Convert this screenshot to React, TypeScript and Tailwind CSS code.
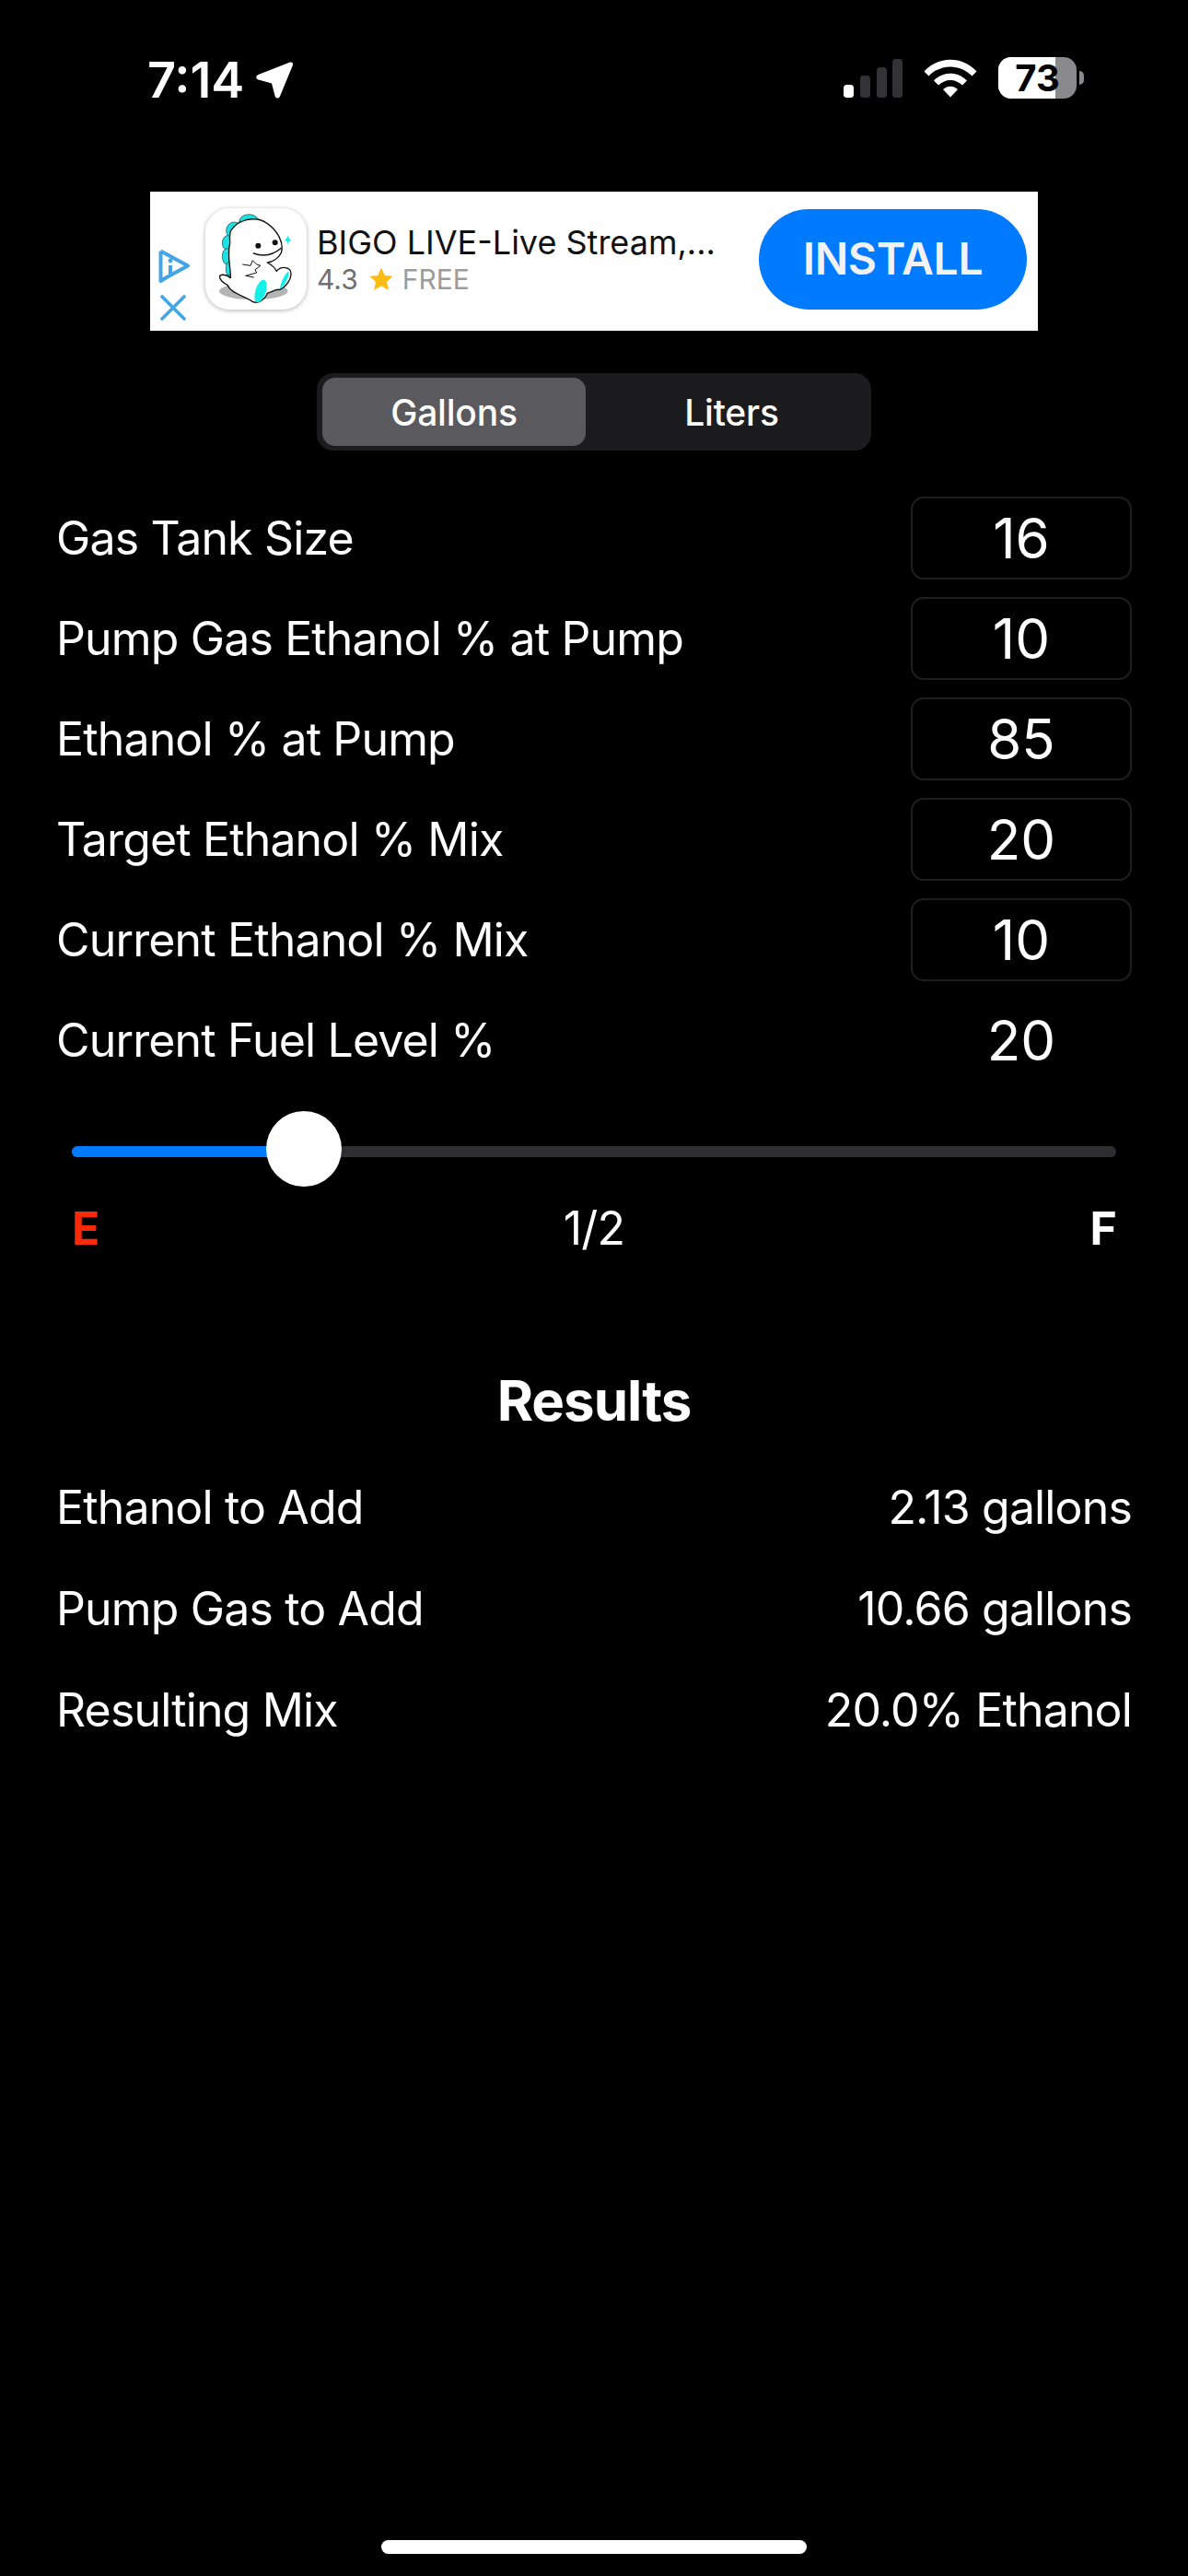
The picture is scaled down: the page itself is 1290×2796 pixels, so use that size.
import React from "react";

const font = { fontFamily: "Inter, 'Liberation Sans', sans-serif" };

function Mascot() {
  return (
    <svg viewBox="218 75 330 330" className="w-full h-full">
      <ellipse cx="375" cy="345" rx="112" ry="28" fill="#b4b4b4" />
      <g fill="#1fe0e0" stroke="#1b3a3a" strokeWidth="2">
        <ellipse cx="360" cy="120" rx="32" ry="25" />
        <ellipse cx="312" cy="148" rx="26" ry="28" />
        <ellipse cx="291" cy="188" rx="18" ry="24" />
        <ellipse cx="288" cy="232" rx="15" ry="26" />
        <ellipse cx="296" cy="272" rx="11" ry="24" />
        <ellipse cx="290" cy="298" rx="12" ry="6" />
      </g>
      <path d="M300 150 C320 115 380 95 420 125 C455 150 475 190 465 220 C455 240 435 250 420 252 C435 260 445 270 450 280 C465 262 497 265 497 288 C497 312 470 345 450 340 L420 352 C410 378 380 390 365 375 C340 360 300 350 290 325 C275 318 262 305 265 295 C275 288 290 295 300 302 C300 260 288 225 298 190 C298 175 296 162 300 150 Z" fill="#fff" stroke="#111" strokeWidth="4" strokeLinejoin="round" />
      <ellipse cx="398" cy="345" rx="17" ry="38" transform="rotate(18 398 345)" fill="#16eee8" />
      <path d="M490 280 C492 300 475 330 460 338 C465 315 475 290 490 280 Z" fill="#16eee8" />
      <circle cx="390" cy="197" r="9" fill="#111" />
      <circle cx="445" cy="187" r="9" fill="#111" />
      <path d="M375 222 Q425 240 465 205" fill="none" stroke="#111" strokeWidth="4" strokeLinecap="round" />
      <path d="M340 258 L365 262 L372 245 L385 258 L398 262 L380 275 L385 285 L350 295 M350 295 L375 300" fill="none" stroke="#111" strokeWidth="3" strokeLinejoin="round" strokeLinecap="round" />
      <path d="M487 163 L491 174 L498 178 L491 182 L487 193 L483 182 L476 178 L483 174 Z" fill="#16eee8" />
    </svg>
  );
}

function InputRow({ label, value, boxed = true }: { label: string; value: string; boxed?: boolean }) {
  return (
    <div className="flex items-center justify-between h-[90px] mb-[19px]">
      <span className="text-[50px] leading-none tracking-[-0.85px] text-white">{label}</span>
      <div className={`w-[240px] h-[90px] rounded-[14px] flex items-center justify-center text-[60px] leading-none text-white ${boxed ? "border-2 border-[#1f1f21]" : ""}`}>
        {value}
      </div>
    </div>
  );
}

function ResultRow({ label, value }: { label: string; value: string }) {
  return (
    <div className="flex items-center justify-between h-[90px] mb-[20px] text-[50px] leading-none tracking-[-0.85px] text-white">
      <span>{label}</span>
      <span>{value}</span>
    </div>
  );
}

export default function App() {
  return (
    <div className="w-[1290px] h-[2796px] bg-black relative overflow-hidden flex flex-col" style={font}>
      {/* status bar */}
      <div className="h-[208px] pt-[62px] pl-[160px] pr-[113px] flex items-start justify-between">
        <div className="flex items-center gap-[12px] h-[50px]">
          <span className="text-[54px] leading-none font-semibold text-white">7:14</span>
          <svg viewBox="0 0 42 42" className="w-[42px] h-[42px]">
            <path d="M38 1.5 C40 1 41.5 2.5 41 4.5 L27 38.5 C25.6 41.5 22.5 41 21.6 38.3 L18 24.5 L3.5 20.5 C0.5 19.5 0.5 16.2 3.5 15 Z" fill="#fff" />
          </svg>
        </div>
        <div className="flex items-start pt-[2px]">
          <svg viewBox="0 0 64 42" className="w-[64px] h-[42px] mr-[23px]">
            <rect x="0" y="28" width="11" height="14" rx="3.5" fill="#fff" />
            <rect x="18" y="18" width="11" height="24" rx="3.5" fill="#333335" />
            <rect x="36" y="9" width="11" height="33" rx="3.5" fill="#333335" />
            <rect x="53" y="0" width="11" height="42" rx="3.5" fill="#333335" />
          </svg>
          <svg viewBox="0 0 58 42" className="w-[58px] h-[42px] mr-[23px]">
            <path d="M0.5 13.5 C16 -3.5 42 -3.5 57.5 13.5 L52.5 18.5 C39.5 5 18.5 5 5.5 18.5 Z" fill="#fff" />
            <path d="M11 23.5 C21 13 37 13 47 23.5 L42 28.5 C34.5 21 23.5 21 16 28.5 Z" fill="#fff" />
            <path d="M21 33 C26 28.5 32 28.5 37 33 L29 41.5 Z" fill="#fff" />
          </svg>
          <div className="relative w-[85px] h-[45px] -mt-[2px] rounded-[14px] bg-[#8a8a8c]">
            <div className="absolute left-0 top-0 bottom-0 w-[62px] rounded-l-[14px] bg-white" />
            <span className="absolute inset-0 flex items-center justify-center text-[40px] leading-none font-bold text-black">73</span>
          </div>
          <div className="w-[5px] h-[15px] mt-[13px] ml-[3px] rounded-r-[5px] bg-[#8a8a8c]" />
        </div>
      </div>

      {/* ad */}
      <div className="w-[964px] h-[151px] ml-[163px] bg-white flex items-center shrink-0">
        <div className="w-[50px] mr-[10px] h-full flex flex-col items-center justify-end pb-[11px] gap-[13px]">
          <svg viewBox="0 0 35 37" className="w-[35px] h-[37px] ml-[2px]">
            <path d="M2.5 2.5 L32 18.5 L9 31 M2.5 2.5 L2.5 35 L9 31" fill="none" stroke="#42a5e8" strokeWidth="4" strokeLinejoin="round" />
            <rect x="11" y="18" width="4" height="10" fill="#42a5e8" />
            <circle cx="13" cy="13" r="2.4" fill="#42a5e8" />
          </svg>
          <svg viewBox="0 0 28 28" className="w-[28px] h-[28px]">
            <path d="M2 2 L26 26 M26 2 L2 26" stroke="#42a5e8" strokeWidth="3.6" strokeLinecap="round" />
          </svg>
        </div>
        <div className="w-[110px] h-[110px] -mt-[5px] rounded-[26px] bg-white shadow-[0_1px_5px_rgba(0,0,0,0.3)] overflow-hidden shrink-0">
          <Mascot />
        </div>
        <div className="ml-[11px] w-[481px] -mt-[6px]">
          <div className="text-[36px] leading-[44px] text-[#111] whitespace-nowrap">BIGO LIVE-Live Stream,...</div>
          <div className="flex items-center h-[36px] text-[30px] leading-none">
            <span className="text-[#6f6f6f]">4.3</span>
            <svg viewBox="0 0 26 26" className="w-[26px] h-[26px] ml-[12px] mr-[10px]">
              <path d="M13 0.5 L16.8 9 L25.5 9.8 L19 16 L21 25 L13 20.2 L5 25 L7 16 L0.5 9.8 L9.2 9 Z" fill="#fdbc11" />
            </svg>
            <span className="text-[#9c9c9c]">FREE</span>
          </div>
        </div>
        <div className="w-[291px] h-[109px] ml-[-1px] -mt-[5px] rounded-full bg-[#007aff] flex items-center justify-center text-[48px] leading-none font-semibold tracking-[-0.3px] text-[#f2f2f2]">
          INSTALL
        </div>
      </div>

      {/* segmented control */}
      <div className="w-[602px] h-[84px] ml-[344px] mt-[46px] rounded-[18px] bg-[#1c1c1e] py-[5px] pl-[6px] pr-[5px] flex shrink-0">
        <div className="w-[286px] h-[74px] rounded-[14px] bg-[#5a5a5e] flex items-center justify-center text-[39px] leading-none tracking-[-0.2px] font-medium text-white">Gallons</div>
        <div className="flex-1 pl-[12px] flex items-center justify-center text-[39px] leading-none tracking-[-0.2px] font-medium text-white">Liters</div>
      </div>

      {/* inputs */}
      <div className="ml-[61px] mr-[61px] mt-[50px]">
        <InputRow label="Gas Tank Size" value="16" />
        <InputRow label="Pump Gas Ethanol % at Pump" value="10" />
        <InputRow label="Ethanol % at Pump" value="85" />
        <InputRow label="Target Ethanol % Mix" value="20" />
        <InputRow label="Current Ethanol % Mix" value="10" />
        <InputRow label="Current Fuel Level %" value="20" boxed={false} />
      </div>

      {/* slider */}
      <div className="mx-[78px] mt-[13px] relative h-[82px] flex items-center shrink-0">
        <div className="w-full h-[12px] rounded-full bg-[#2e2e30] overflow-hidden mt-[6px]">
          <div className="w-[240px] h-full bg-[#007aff]" />
        </div>
        <div className="absolute left-[211px] top-0 w-[82px] h-[82px] rounded-full bg-white" />
      </div>
      <div className="mx-[78px] mt-[20px] h-[50px] grid grid-cols-3 items-center text-[50px] leading-none tracking-[-0.85px] text-white">
        <span className="font-bold text-[#f92a0a]">E</span>
        <span className="text-center">1/2</span>
        <span className="text-right font-bold">F</span>
      </div>

      {/* results */}
      <div className="mt-[132px] text-center text-[60px] leading-none font-bold tracking-[-1px] text-white">Results</div>
      <div className="mx-[61px] mt-[41px]">
        <ResultRow label="Ethanol to Add" value="2.13 gallons" />
        <ResultRow label="Pump Gas to Add" value="10.66 gallons" />
        <ResultRow label="Resulting Mix" value="20.0% Ethanol" />
      </div>

      {/* home indicator */}
      <div className="absolute left-[414px] top-[2757px] w-[462px] h-[15px] rounded-[8px] bg-white" />
    </div>
  );
}
